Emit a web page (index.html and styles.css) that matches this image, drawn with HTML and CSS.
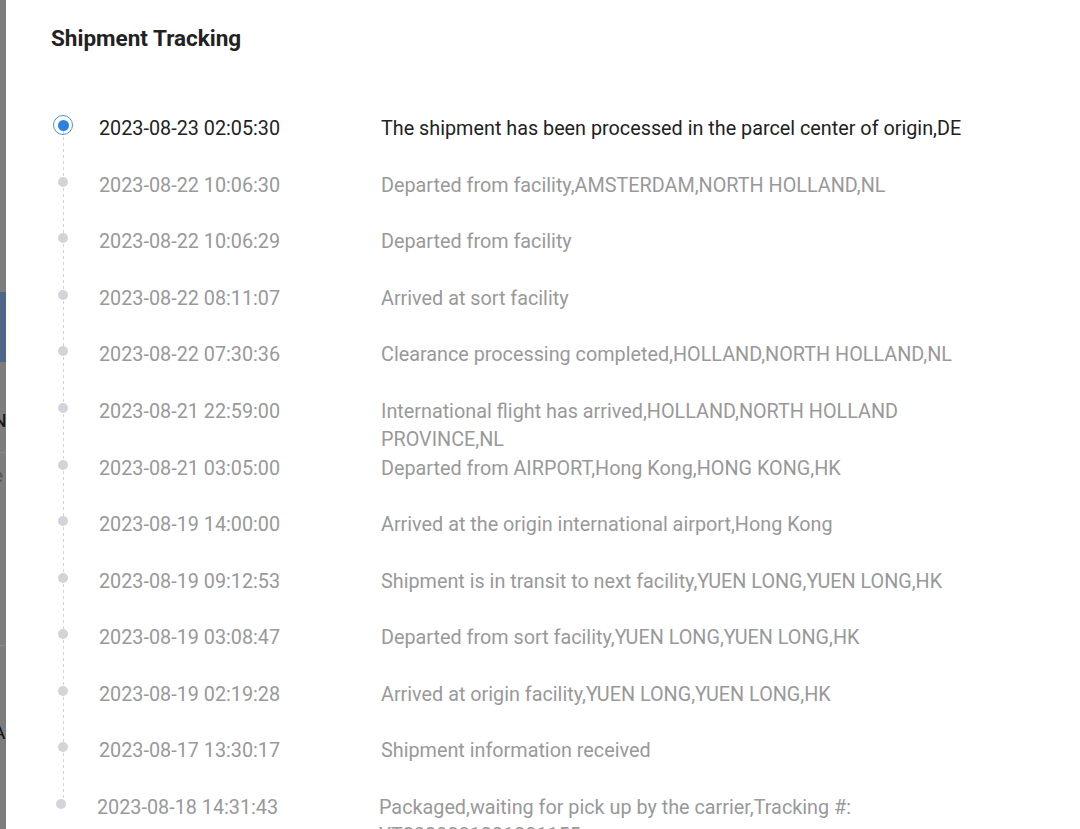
FILE: index.html
```html
<!DOCTYPE html>
<html lang="en">
<head>
    <meta charset="UTF-8">
    <meta name="viewport" content="width=device-width, initial-scale=1.0">
    <title>Shipment Tracking</title>
    <link rel="stylesheet" href="styles.css">
</head>
<body>
    <div class="backdrop">
        <div class="bd-text bd-r">r</div>
        <div class="bd-text bd-t">t</div>
        <div class="bd-block"></div>
        <div class="bd-text bd-n">N</div>
        <div class="bd-rule"></div>
        <div class="bd-text bd-e">e</div>
        <div class="bd-rule bd-rule-low"></div>
        <div class="bd-text bd-a">A</div>
    </div>

    <div class="drawer">
        <h2 class="drawer-title">Shipment Tracking</h2>

        <ul class="timeline">
            <li class="item active">
                <span class="dot"></span>
                <span class="time">2023-08-23 02:05:30</span>
                <span class="desc">The shipment has been processed in the parcel center of origin,DE</span>
            </li>
            <li class="item">
                <span class="dot"></span>
                <span class="time">2023-08-22 10:06:30</span>
                <span class="desc">Departed from facility,AMSTERDAM,NORTH HOLLAND,NL</span>
            </li>
            <li class="item">
                <span class="dot"></span>
                <span class="time">2023-08-22 10:06:29</span>
                <span class="desc">Departed from facility</span>
            </li>
            <li class="item">
                <span class="dot"></span>
                <span class="time">2023-08-22 08:11:07</span>
                <span class="desc">Arrived at sort facility</span>
            </li>
            <li class="item">
                <span class="dot"></span>
                <span class="time">2023-08-22 07:30:36</span>
                <span class="desc">Clearance processing completed,HOLLAND,NORTH HOLLAND,NL</span>
            </li>
            <li class="item">
                <span class="dot"></span>
                <span class="time">2023-08-21 22:59:00</span>
                <span class="desc">International flight has arrived,HOLLAND,NORTH HOLLAND PROVINCE,NL</span>
            </li>
            <li class="item">
                <span class="dot"></span>
                <span class="time">2023-08-21 03:05:00</span>
                <span class="desc">Departed from AIRPORT,Hong Kong,HONG KONG,HK</span>
            </li>
            <li class="item">
                <span class="dot"></span>
                <span class="time">2023-08-19 14:00:00</span>
                <span class="desc">Arrived at the origin international airport,Hong Kong</span>
            </li>
            <li class="item">
                <span class="dot"></span>
                <span class="time">2023-08-19 09:12:53</span>
                <span class="desc">Shipment is in transit to next facility,YUEN LONG,YUEN LONG,HK</span>
            </li>
            <li class="item">
                <span class="dot"></span>
                <span class="time">2023-08-19 03:08:47</span>
                <span class="desc">Departed from sort facility,YUEN LONG,YUEN LONG,HK</span>
            </li>
            <li class="item">
                <span class="dot"></span>
                <span class="time">2023-08-19 02:19:28</span>
                <span class="desc">Arrived at origin facility,YUEN LONG,YUEN LONG,HK</span>
            </li>
            <li class="item">
                <span class="dot"></span>
                <span class="time">2023-08-17 13:30:17</span>
                <span class="desc">Shipment information received</span>
            </li>
            <li class="item last">
                <span class="dot"></span>
                <span class="time">2023-08-18 14:31:43</span>
                <span class="desc">Packaged,waiting for pick up by the carrier,Tracking #: YT2323081201001155</span>
            </li>
        </ul>
    </div>
</body>
</html>
```

FILE: styles.css
```css
* {
    margin: 0;
    padding: 0;
    box-sizing: border-box;
}

html, body {
    height: 100%;
    overflow: hidden;
}

body {
    font-family: Roboto, "Liberation Sans", Arial, sans-serif;
    display: flex;
    background: #fff;
}

/* page behind the drawer, under the grey mask */
.backdrop {
    width: 6px;
    flex-shrink: 0;
    background: #7d7d7d;
    overflow: hidden;
    display: flex;
    flex-direction: column;
    align-items: flex-end;
    font-size: 19px;
    color: #111;
}

.bd-text {
    width: 6px;
    line-height: 22px;
    text-indent: -7px;
    white-space: nowrap;
}

.bd-r { margin-top: 114px; }
.bd-t { margin-top: 34px; color: #2c5d8f; }

.bd-block {
    width: 6px;
    height: 70px;
    margin-top: 100px;
    background: #4f6786;
}

.bd-n { margin-top: 48px; }

.bd-rule {
    width: 6px;
    height: 1px;
    margin-top: 20px;
    background: #8a8a8a;
}

.bd-e { margin-top: 12px; color: #555; }
.bd-rule-low { margin-top: 158px; }
.bd-a { margin-top: 76px; }

.drawer {
    flex: 1;
    padding: 24px 70px 0 45px;
}

.drawer-title {
    font-size: 22.5px;
    font-weight: bold;
    color: #222;
    line-height: 28px;
    margin-bottom: 63px;
}

.timeline {
    list-style: none;
}

.item {
    position: relative;
    display: grid;
    grid-template-columns: 24px 258px 1fr;
    column-gap: 24px;
    min-height: 56.5px;
    line-height: 28.5px;
    font-size: 19.8px;
    color: #999;
}

.time {
    grid-column: 2;
}

.desc {
    grid-column: 3;
}

.item::before {
    content: "";
    position: absolute;
    left: 12px;
    top: 10px;
    bottom: -10px;
    width: 1px;
    background: repeating-linear-gradient(to bottom, #d4d4d4 0 3px, transparent 3px 6px);
}

.item.last::before {
    display: none;
}

.dot {
    grid-column: 1;
    grid-row: 1;
    position: relative;
    z-index: 1;
    width: 10px;
    height: 10px;
    margin: 5px 0 0 7px;
    border-radius: 50%;
    background: #d3d3d9;
}

.item.active {
    color: #222;
}

.item.active .dot {
    width: 20px;
    height: 20px;
    margin: 0 0 0 2px;
    border: 1px solid #4a90e2;
    background: #2b80e0;
    background-clip: content-box;
    padding: 3.5px;
}

.item.last {
    margin-left: -2px;
}

.item.last .time {
    margin-right: -1px;
}
```
